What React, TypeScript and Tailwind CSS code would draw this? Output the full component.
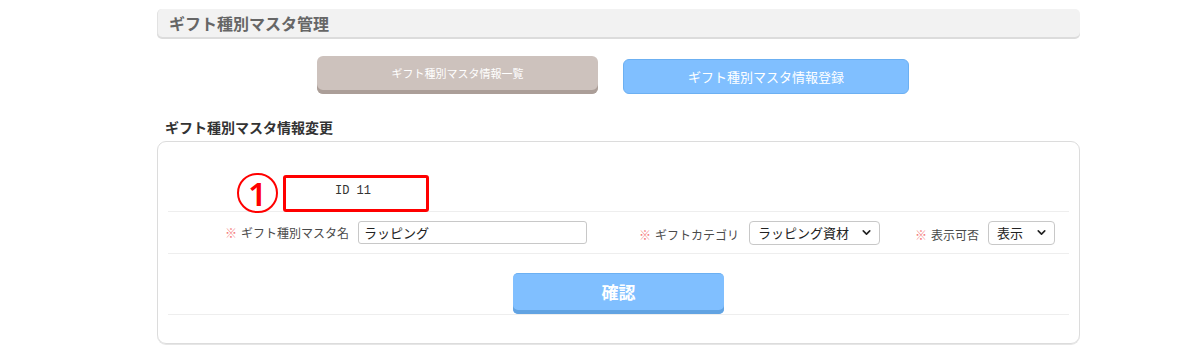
import { ChevronDown } from 'lucide-react';

function Label({ text }: { text: string }) {
  return (
    <span className="text-[12px] text-[#4a4a4a] whitespace-nowrap">
      <span className="text-[#f47b7b] mr-[4px]">※</span>
      {text}
    </span>
  );
}

function FakeSelect({ value, width }: { value: string; width: string }) {
  return (
    <div
      className={`${width} h-[24px] border border-[#c8c8c8] rounded-[4px] bg-white flex items-center justify-between pl-[8px] pr-[6px] text-[13px] text-[#222]`}
    >
      <span>{value}</span>
      <ChevronDown size={13} strokeWidth={3} className="text-[#222]" />
    </div>
  );
}

export default function App() {
  return (
    <div className="w-[1200px] h-[350px] bg-white font-['Noto_Sans_CJK_JP',sans-serif] pt-[9px]">
      <div className="ml-[157px] w-[923px]">
        {/* page title */}
        <div className="h-[28px] bg-[#f2f2f2] rounded-[5px] border-l border-[#e2e2e2] shadow-[0_2px_0_#dcdcdc] flex items-center pl-[11px]">
          <h1 className="text-[16px] font-bold text-[#666] leading-none">ギフト種別マスタ管理</h1>
        </div>

        {/* tabs */}
        <div className="flex items-end gap-[25px] ml-[160px] mt-[19px] h-[38px]">
          <div className="w-[281px] h-[38px] rounded-[6px] bg-[#cdc2bd] shadow-[inset_0_-4px_0_#ab9e98] flex items-center justify-center pb-[4px]">
            <span className="text-[11px] text-white">ギフト種別マスタ情報一覧</span>
          </div>
          <div className="w-[286px] h-[35px] rounded-[6px] bg-[#80bfff] border border-[#6cb0f2] flex items-center justify-center">
            <span className="text-[13px] text-white">ギフト種別マスタ情報登録</span>
          </div>
        </div>

        <h2 className="mt-[23px] ml-[8px] text-[14px] font-bold text-[#333] leading-[20px]">ギフト種別マスタ情報変更</h2>

        {/* form panel */}
        <div className="mt-[4px] border border-[#dcdcdc] rounded-[9px] px-[10px] pb-[28px] shadow-[0_1px_0_#e6e6e6]">
          <div className="relative h-[70px] border-b border-[#eeeeee] flex items-end pb-[11px]">
            <span className="ml-[167px] font-['Liberation_Mono',monospace] text-[12px] text-[#333]">ID 11</span>
            <div className="absolute left-[69px] top-[31px] w-[41px] h-[40px] rounded-full border-2 border-[#ff0000] flex items-center justify-center">
              <span className="text-[33px] font-semibold text-[#ff0000] leading-none font-['Noto_Sans',sans-serif]">1</span>
            </div>
            <div className="absolute left-[115px] top-[33px] w-[146px] h-[37px] border-[3px] border-[#ff0000] rounded-[3px]" />
          </div>

          <div className="h-[42px] border-b border-[#eeeeee] flex items-center pl-[57px]">
            <Label text="ギフト種別マスタ名" />
            <div className="ml-[9px] w-[229px] h-[23px] border border-[#c8c8c8] rounded-[3px] bg-white flex items-center pl-[5px] text-[13px] text-[#222]">
              ラッピング
            </div>
            <div className="ml-[52px]">
              <Label text="ギフトカテゴリ" />
            </div>
            <div className="ml-[10px]">
              <FakeSelect value="ラッピング資材" width="w-[131px]" />
            </div>
            <div className="ml-[35px]">
              <Label text="表示可否" />
            </div>
            <div className="ml-[9px]">
              <FakeSelect value="表示" width="w-[67px]" />
            </div>
          </div>

          <div className="border-b border-[#eeeeee] flex justify-center pt-[19px]">
            <div className="w-[211px] h-[41px] rounded-[5px] bg-[#80bfff] border-t border-[#6cb0f2] shadow-[inset_0_-4px_0_#62a3e2] flex items-center justify-center pb-[4px]">
              <span className="text-[17px] font-bold text-white">確認</span>
            </div>
          </div>
        </div>
      </div>
    </div>
  );
}
